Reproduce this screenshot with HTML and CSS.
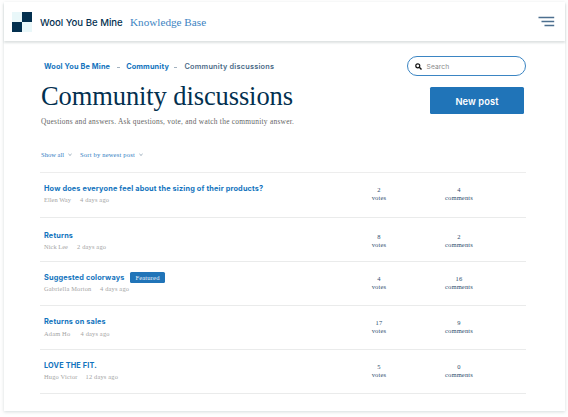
FILE: index.html
```html
<!DOCTYPE html>
<html lang="en">
<head>
<meta charset="utf-8">
<title>Community discussions</title>
<link rel="stylesheet" href="styles.css">
</head>
<body>
<div class="page">
  <header class="header">
    <svg class="logo" width="20" height="20" viewBox="0 0 20 20"><path fill="#e9f7f9" d="M0 0h20v20H0z"/><path fill="#03304f" d="M10 0h10v10H10zM0 10h10v10H0z"/></svg>
    <span class="brand">Wool You Be Mine</span>
    <span class="kb">Knowledge Base</span>
    <svg class="menu" width="17" height="12" viewBox="0 0 17 12"><path stroke="#4d6f8f" stroke-width="1.6" d="M.5 1.5h15.7M3.5 5.5h12.7M6.5 9.5h9.7"/></svg>
  </header>
  <main class="main">
    <section class="top">
      <div class="intro">
        <nav class="crumbs">
          <a>Wool You Be Mine</a><i class="sep"></i><a>Community</a><i class="sep sep-last"></i><span>Community discussions</span>
        </nav>
        <h1>Community discussions</h1>
        <p class="lead">Questions and answers. Ask questions, vote, and watch the community answer.</p>
      </div>
      <div class="actions">
        <div class="search">
          <svg width="7" height="7" viewBox="0 0 7 7" fill="none" stroke="#111"><circle cx="2.8" cy="2.8" r="2" stroke-width="1.2"/><path stroke-width="1.4" d="M4.3 4.3l2.2 2.2"/></svg>
          <span>Search</span>
        </div>
        <a class="new-post">New post</a>
      </div>
    </section>
    <div class="filters">
      <span class="show">Show all</span><svg width="4" height="4" viewBox="0 0 4 4"><path d="M.5 .6L2 2.7 3.5 .6"/></svg>
      <span class="sort">Sort by newest post</span><svg width="4" height="4" viewBox="0 0 4 4"><path d="M.5 .6L2 2.7 3.5 .6"/></svg>
    </div>
    <ul class="posts">
      <li class="post first">
        <div class="info"><h2>How does everyone feel about the sizing of their products?</h2><div class="meta"><span class="m1">Ellen Way</span><span>4 days ago</span></div></div>
        <div class="count">2<br>votes</div><div class="count comments">4<br>comments</div>
      </li>
      <li class="post second">
        <div class="info"><h2>Returns</h2><div class="meta"><span class="m2">Nick Lee</span><span>2 days ago</span></div></div>
        <div class="count">8<br>votes</div><div class="count comments">2<br>comments</div>
      </li>
      <li class="post">
        <div class="info"><h2>Suggested colorways<span class="badge">Featured</span></h2><div class="meta"><span class="m3">Gabriella Morton</span><span>4 days ago</span></div></div>
        <div class="count">4<br>votes</div><div class="count comments">16<br>comments</div>
      </li>
      <li class="post">
        <div class="info"><h2>Returns on sales</h2><div class="meta low"><span class="m4">Adam Ho</span><span>4 days ago</span></div></div>
        <div class="count">17<br>votes</div><div class="count comments">9<br>comments</div>
      </li>
      <li class="post">
        <div class="info"><h2>LOVE THE FIT.</h2><div class="meta"><span class="m5">Hugo Victor</span><span>12 days ago</span></div></div>
        <div class="count">5<br>votes</div><div class="count comments">0<br>comments</div>
      </li>
    </ul>
  </main>
</div>
</body>
</html>
```
FILE: styles.css
```css
* { box-sizing: border-box; }
body {
  margin: 0;
  padding: 2px 3.5px 0 4px;
  height: 417px;
  overflow: hidden;
  background: #fefefe;
  font-family: "Liberation Serif", serif;
  color: #03304f;
}
.page {
  height: 408.5px;
  background: #fff;
  box-shadow: 0 1px 3px rgba(20, 60, 60, .17);
}
.header {
  display: flex;
  align-items: center;
  height: 39px;
  padding: 1px 10px 0 8px;
  box-shadow: 0 1.5px 2px rgba(20, 50, 50, .14);
}
.brand {
  width: 90px;
  margin: 1px 0 0 8px;
  font: 500 9.6px/14px Inter, sans-serif;
  white-space: nowrap;
}
.kb {
  font-size: 11.2px;
  line-height: 14px;
  color: #3d84c2;
}
.menu { margin-left: auto; }
.main { padding: 15px 38.5px 0 36px; }
.top {
  display: flex;
  justify-content: space-between;
  height: 90px;
}
.crumbs {
  display: flex;
  align-items: center;
  height: 21px;
  padding: 1px 0 0 4px;
  font: 700 7.3px/12px Inter, sans-serif;
  letter-spacing: .15px;
  color: #1173bd;
}
.crumbs span { font-weight: 600; color: #4a6a87; letter-spacing: .24px; }
.sep {
  width: 3px;
  height: 1px;
  margin: 0 6.5px;
  background: #a3b2c0;
}
.sep-last { margin: 0 7px 0 5.5px; }
h1 {
  margin: 3px 0 0 1px;
  font-size: 26.5px;
  line-height: 33px;
  font-weight: 400;
  letter-spacing: -.1px;
  white-space: nowrap;
}
.lead {
  margin: 3px 0 0 1px;
  font-size: 7.4px;
  line-height: 12px;
  letter-spacing: .26px;
  color: #666;
  white-space: nowrap;
}
.actions {
  display: flex;
  flex-direction: column;
  align-items: flex-end;
}
.search {
  display: flex;
  align-items: center;
  width: 119px;
  height: 19.5px;
  padding: 1px 0 0 6.5px;
  border: 1.4px solid #3b85c3;
  border-radius: 10px;
  font: 400 6.7px/12px Inter, sans-serif;
  letter-spacing: .1px;
  color: #8b8b8b;
}
.search span { margin: 2px 0 0 5px; }
.new-post {
  width: 94px;
  height: 27px;
  margin: 11.5px 2px 0 0;
  border-radius: 1.5px;
  background: #2074b8;
  font: 600 9.3px/30px Inter, sans-serif;
  letter-spacing: .08px;
  text-align: center;
  color: #fff;
}
.filters {
  display: flex;
  align-items: center;
  height: 16px;
  padding: 1px 0 0 1px;
  font-size: 6.5px;
  line-height: 10px;
  color: #2c7bbf;
}
.filters svg { margin-left: 3px; fill: none; stroke: #8a9fb0; stroke-width: .7; }
.show { width: 23.5px; letter-spacing: .03px; white-space: nowrap; }
.sort { width: 55.5px; margin-left: 8.5px; letter-spacing: .2px; white-space: nowrap; }
.posts {
  list-style: none;
  margin: 10px 0 0;
  padding: 0;
  border-top: 1px solid #ededed;
}
.post {
  display: flex;
  height: 44px;
  padding-top: 9px;
  border-bottom: 1px solid #eaebeb;
}
.first { height: 45px; }
.second { padding-top: 11px; }
.info { width: 299px; padding-left: 4px; }
h2 {
  display: flex;
  align-items: center;
  height: 13px;
  margin: 0;
  padding-top: 1px;
  font: 700 7.3px/12px Inter, sans-serif;
  letter-spacing: .17px;
  color: #1173bd;
  white-space: nowrap;
}
.badge {
  width: 35px;
  height: 11px;
  margin: -1px 0 0 5.5px;
  border-radius: 1.5px;
  background: #2074b8;
  font: 400 6.6px/11px "Liberation Serif", serif;
  letter-spacing: .15px;
  text-align: center;
  color: #e8f3fb;
}
.meta {
  display: flex;
  font-size: 6.4px;
  line-height: 10px;
  letter-spacing: .18px;
  color: #a4a4a4;
  white-space: nowrap;
}
.low { padding-top: 1px; }
.m1 { width: 36px; letter-spacing: .05px; }
.m2 { width: 33px; letter-spacing: .05px; }
.m3 { width: 56px; }
.m4 { width: 36.5px; }
.m5 { width: 41.5px; }
.count {
  width: 80px;
  padding-top: 4px;
  font-size: 6.5px;
  line-height: 8px;
  letter-spacing: .18px;
  text-align: center;
  color: #2d4d6e;
}
```
